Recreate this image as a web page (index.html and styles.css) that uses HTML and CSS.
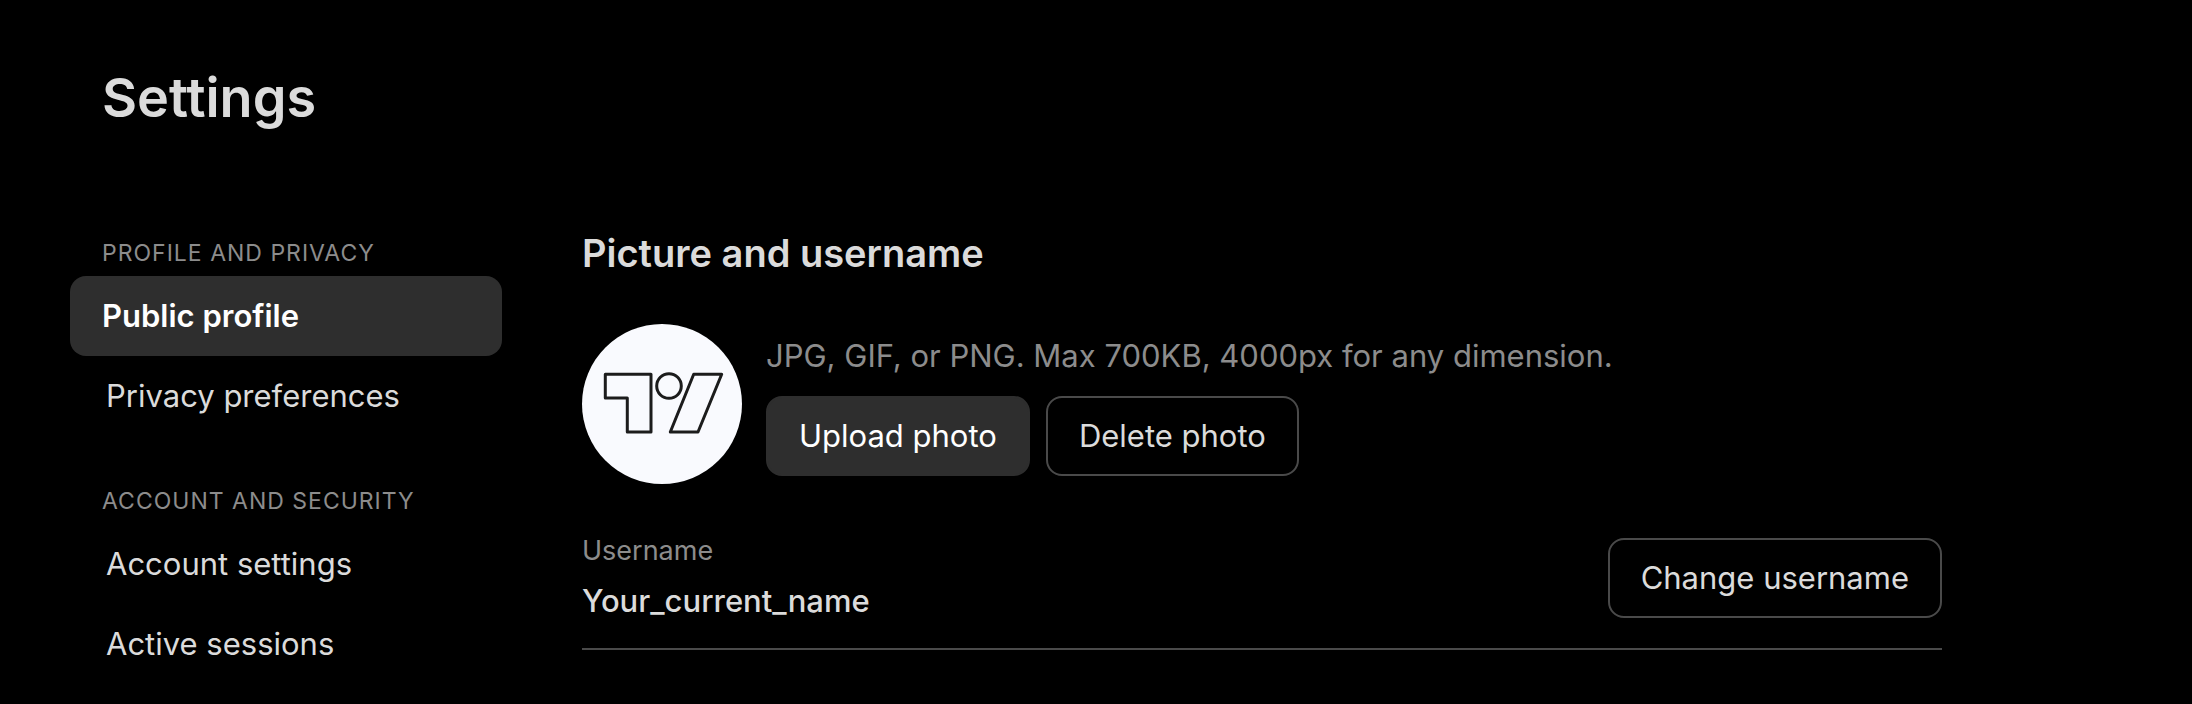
FILE: index.html
```html
<!DOCTYPE html>
<html lang="en">
<head>
    <meta charset="UTF-8">
    <meta name="viewport" content="width=device-width, initial-scale=1.0">
    <title>Settings</title>
    <link rel="stylesheet" href="styles.css">
</head>
<body>
    <div class="page">
        <h1 class="page-title">Settings</h1>

        <div class="layout">
            <nav class="sidebar">
                <div class="nav-group">
                    <h2 class="nav-label">Profile and privacy</h2>
                    <a href="#public-profile" class="nav-item active">Public profile</a>
                    <a href="#privacy" class="nav-item">Privacy preferences</a>
                </div>
                <div class="nav-group">
                    <h2 class="nav-label">Account and security</h2>
                    <a href="#account" class="nav-item">Account settings</a>
                    <a href="#sessions" class="nav-item">Active sessions</a>
                </div>
            </nav>

            <main class="content">
                <h2 class="section-title">Picture and username</h2>

                <div class="photo-row">
                    <svg class="avatar" viewBox="0 0 160 160" aria-hidden="true">
                        <circle cx="80" cy="80" r="80" fill="#f9fafe"/>
                        <g fill="none" stroke="#1c1c1c" stroke-width="3" stroke-linejoin="round">
                            <path d="M23.3 50.3H69V108H45.3V74H23.3Z"/>
                            <circle cx="87" cy="62" r="12.3"/>
                            <path d="M111.7 50.3H139.7L116 108H88.3Z"/>
                        </g>
                    </svg>
                    <div class="photo-info">
                        <p class="hint">JPG, GIF, or PNG. Max 700KB, 4000px for any dimension.</p>
                        <div class="photo-actions">
                            <button type="button" class="btn btn-filled">Upload photo</button>
                            <button type="button" class="btn">Delete photo</button>
                        </div>
                    </div>
                </div>

                <div class="username-row">
                    <div class="username">
                        <div class="field-label">Username</div>
                        <div class="field-value">Your_current_name</div>
                    </div>
                    <button type="button" class="btn">Change username</button>
                </div>
            </main>
        </div>
    </div>
</body>
</html>
```
FILE: styles.css
```css
* {
    box-sizing: border-box;
}

body {
    margin: 0;
    background-color: #000;
    color: #dbdbdb;
    font-family: Inter, 'Liberation Sans', sans-serif;
    font-size: 31px;
    line-height: 48px;
}

h1, h2, p {
    margin: 0;
}

.page {
    padding: 62px 70px 0;
}

.page-title {
    padding-left: 32px;
    font-size: 54px;
    font-weight: 600;
    line-height: 72px;
}

.layout {
    display: flex;
    gap: 80px;
    margin-top: 102px;
}

.sidebar {
    display: flex;
    flex-direction: column;
    flex: 0 0 432px;
    gap: 48px;
}

.nav-group {
    display: flex;
    flex-direction: column;
}

.nav-label {
    margin-bottom: 6px;
    padding-left: 32px;
    color: #8c8c8c;
    font-size: 23px;
    font-weight: 400;
    line-height: 34px;
    letter-spacing: 1px;
    text-transform: uppercase;
}

.nav-item {
    padding: 16px 36px;
    border-radius: 16px;
    color: #dbdbdb;
    text-decoration: none;
}

.nav-item.active {
    padding: 16px 32px;
    background-color: #2e2e2e;
    color: #fff;
    font-weight: 600;
}

.content {
    flex: 1;
    min-width: 0;
    max-width: 1360px;
}

.section-title {
    font-size: 38px;
    font-weight: 600;
    line-height: 34px;
}

.photo-row {
    display: flex;
    align-items: center;
    gap: 24px;
    margin-top: 54px;
}

.avatar {
    flex: none;
    width: 160px;
    height: 160px;
}

.photo-info {
    display: flex;
    flex-direction: column;
    gap: 16px;
}

.hint {
    color: #8c8c8c;
}

.photo-actions {
    display: flex;
    gap: 16px;
}

.btn {
    padding: 14px 31px;
    border: 2px solid #4a4a4a;
    border-radius: 16px;
    background-color: transparent;
    color: #dbdbdb;
    font: inherit;
    white-space: nowrap;
    cursor: pointer;
}

.btn-filled {
    border-color: #2e2e2e;
    background-color: #2e2e2e;
    color: #fff;
}

.username-row {
    display: flex;
    align-items: center;
    justify-content: space-between;
    margin-top: 47px;
    padding-bottom: 23px;
    border-bottom: 2px solid #4a4a4a;
}

.username {
    display: flex;
    flex-direction: column;
    gap: 6px;
}

.field-label {
    color: #8c8c8c;
    font-size: 27px;
    line-height: 40px;
}

.field-value {
    font-weight: 500;
}
```
